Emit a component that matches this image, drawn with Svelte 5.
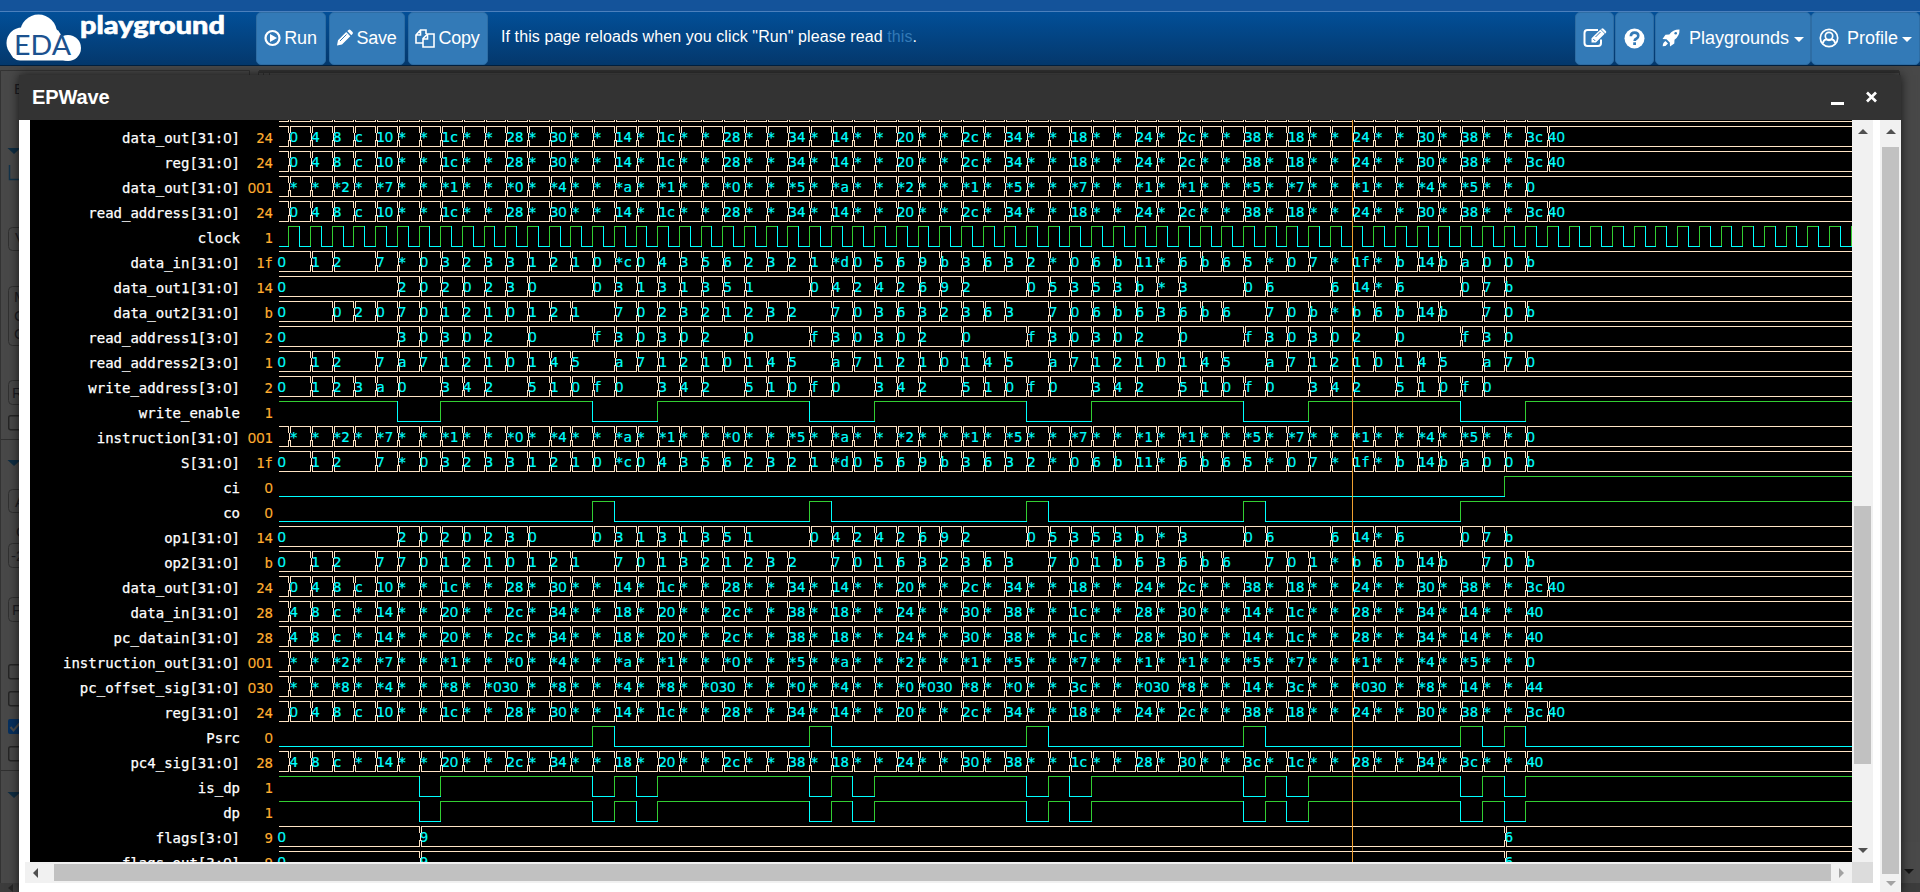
<script>
  const STEP = 21.7;
  const FIRST = 10.3;
  const WIDTH = 1573;
  const at = (k) => FIRST + STEP * k;

  const pcOut =
    '~ 0 4 8 c 10 * * 1c * * 28 * 30 * * 14 * 1c * * 28 * * 34 * 14 * * 20 * * 2c * 34 * * 18 * * 24 * 2c * * 38 * 18 * * 24 * * 30 * 38 * * 3c 40';
  const instr =
    '~ * * *2 * *7 * * *1 * * *0 * *4 * * *a * *1 * * *0 * * *5 * *a * * *2 * * *1 * *5 * * *7 * * *1 * *1 * * *5 * *7 * * *1 * * *4 * *5 * * 0';
  const sum =
    '0 . 1 2 . 7 * 0 3 2 3 3 1 2 1 0 *c 0 4 3 5 6 2 3 2 1 *d 0 5 6 9 b 3 6 3 2 * 0 6 b 11 * 6 b 6 5 * 0 7 * 1f * b 14 b a 0 0 b';
  const op1 =
    '0 . . . . . 2 0 2 0 2 3 0 . . 0 3 1 3 1 3 5 1 . . 0 4 2 4 2 6 9 2 . . 0 5 3 5 3 b * 3 . . 0 6 . . 6 14 * 6 . . 0 7 b';
  const out2 =
    '0 . . 0 2 0 7 0 1 2 1 0 1 2 1 . 7 0 2 3 2 1 2 3 2 . 7 0 3 6 3 2 3 6 3 . 7 0 6 b 6 3 6 b 6 . 7 0 b * b 6 b 14 b . 7 0 b';
  const op2 =
    '0 . 1 2 . 7 7 0 1 2 1 0 1 2 1 . 7 0 1 3 2 1 2 3 2 . 7 0 1 6 3 2 3 6 3 . 7 0 1 b 6 3 6 b 6 . 7 0 1 * b 6 b 14 b . 7 0 b';
  const ra1 =
    '0 . . . . . ' + '3 0 3 0 2 . 0 . . f '.repeat(5) + '3 0';
  const ra2 =
    '0 . 1 2 . 7 ' + 'a 7 1 2 1 0 1 4 5 . '.repeat(5) + 'a 7 0';
  const wa =
    '0 . 1 2 3 a ' + '0 . 3 4 2 . 5 1 0 f '.repeat(5) + '0';
  const next = (m) =>
    `~ 4 8 c * 14 * * 20 * * 2c * 34 * * 18 * 20 * * 2c * * 38 * 18 * * 24 * * 30 * 38 * * 1c * * 28 * 30 * * ${m} * 1c * * 28 * * 34 * ${m} * * 40`;
  const offset =
    '~ * * *8 * *4 * * *8 * *030 . * *8 * * *4 * *8 * *030 . * * *0 * *4 * * *0 *030 . *8 * *0 * * 3c * * *030 . *8 * * 14 * 3c * * *030 . * *8 * 14 * * 44';
  const flags = '0 . . . . . . 9' + ' .'.repeat(49) + ' 6';
  const blank = Array(59).fill('~').join(' ');

  const dpEdges = [6, 7, 14, 15, 16, 17, 24, 25, 26, 27, 34, 35, 36, 37, 44, 45, 46, 47, 54, 55, 56, 57];
  const clockEdges = Array.from({ length: 145 }, (_, i) => i / 2);

  const bus = (name, value, data) => ({ name, value, cells: cells(data) });
  const bit = (name, value, start, edges) => ({ name, value, lines: lines(start, edges) });

  function cells(data) {
    const out = [];
    data.split(' ').forEach((token, i) => {
      if (token === '.') return;
      const x = i === 0 ? -2 : at(i - 1);
      if (out.length) out[out.length - 1].end = x;
      out.push({ x, end: WIDTH + 6, text: token === '~' ? '' : token });
    });
    return out;
  }

  function outline(c) {
    const a = Math.round(c.x) + 0.5;
    const b = Math.round(c.end) + 0.5;
    const l = Math.max(a + 1, 0);
    const r = Math.min(b - 1, WIDTH);
    let d = `M${l} 2.5H${r}M${l} 22.5H${r}`;
    if (c.x > 0) d += `M${a + 1} 2V9M${a} 8.5V16.5M${a + 1} 16V23`;
    if (c.end < WIDTH) d += `M${b - 1} 2V9M${b} 8.5V16.5M${b - 1} 16V23`;
    return d;
  }

  function lines(start, edges) {
    let level = start;
    let x = 0;
    let high = '';
    let low = '';
    for (const k of edges) {
      const nx = Math.round(at(k) - 1) + 0.5;
      if (nx > WIDTH) break;
      if (level) {
        high += `M${x} 2.5H${nx}`;
        low += `M${nx} 2V23`;
      } else {
        low += `M${x} 22.5H${nx}`;
        high += `M${nx} 2V23`;
      }
      x = nx;
      level = !level;
    }
    if (level) high += `M${x} 2.5H${WIDTH}`;
    else low += `M${x} 22.5H${WIDTH}`;
    return { high, low };
  }

  const signals = [
    bus('', '', blank),
    bus('data_out[31:0]', '24', pcOut),
    bus('reg[31:0]', '24', pcOut),
    bus('data_out[31:0]', '001', instr),
    bus('read_address[31:0]', '24', pcOut),
    bit('clock', '1', false, clockEdges),
    bus('data_in[31:0]', '1f', sum),
    bus('data_out1[31:0]', '14', op1),
    bus('data_out2[31:0]', 'b', out2),
    bus('read_address1[3:0]', '2', ra1),
    bus('read_address2[3:0]', '1', ra2),
    bus('write_address[3:0]', '2', wa),
    bit('write_enable', '1', true, [5, 7, 14, 17, 24, 27, 34, 37, 44, 47, 54, 57]),
    bus('instruction[31:0]', '001', instr),
    bus('S[31:0]', '1f', sum),
    bit('ci', '0', false, [56]),
    bit('co', '0', false, [14, 15, 24, 25, 34, 35, 44, 45, 54]),
    bus('op1[31:0]', '14', op1),
    bus('op2[31:0]', 'b', op2),
    bus('data_out[31:0]', '24', pcOut),
    bus('data_in[31:0]', '28', next('14')),
    bus('pc_datain[31:0]', '28', next('14')),
    bus('instruction_out[31:0]', '001', instr),
    bus('pc_offset_sig[31:0]', '030', offset),
    bus('reg[31:0]', '24', pcOut),
    bit('Psrc', '0', false, [14, 15, 24, 25, 34, 35, 44, 45, 54, 55, 56, 57]),
    bus('pc4_sig[31:0]', '28', next('3c')),
    bit('is_dp', '1', true, dpEdges),
    bit('dp', '1', true, dpEdges),
    bus('flags[3:0]', '9', flags),
    bus('flags_out[3:0]', '9', flags),
  ];

  const parts = (s) => s.split(/(0+)/).filter(Boolean);
</script>

{#snippet label(s)}{#each parts(s) as p}{#if p[0] === '0'}<span class="zero">{p}</span>{:else}{p}{/if}{/each}{/snippet}

<div class="page">
  <div class="strip"></div>
  <header>
    <svg class="logo" width="232" height="53" viewBox="0 12 232 53">
      <g fill="#fff">
        <circle cx="38.500" cy="33" r="18.500" /><circle cx="22" cy="43" r="15.500" />
        <circle cx="68" cy="48" r="13" /><rect x="10" y="38" width="66" height="22.500" rx="10" />
        <circle cx="52" cy="37" r="9" />
      </g>
      <text class="eda" x="14" y="55" textLength="57" lengthAdjust="spacingAndGlyphs">EDA</text>
      <text class="play" x="80" y="34" textLength="145" lengthAdjust="spacingAndGlyphs">playground</text>
    </svg>
    <div class="group left">
      <button class="run">
        <svg width="17" height="18" viewBox="0 0 17 18"><circle cx="8.500" cy="9" r="7" fill="none" stroke="#fff" stroke-width="2.200" /><path d="M6 5l7 4-7 4z" fill="#fff" /></svg>Run
      </button>
      <button class="save">
        <svg width="17" height="18" viewBox="0 0 17 18"><path d="M1 16.500l1-5.200L10.200 3l4.100 4.200L6 15.500zM11.300 2l1.200-1.100q1-.8 2 .1l2 2q.8 1 0 2l-1.200 1.200z" fill="#fff" /><path d="M4 12l6.500-6.500" stroke="#337ab7" stroke-width="1" /></svg>Save
      </button>
      <button class="copy">
        <svg width="20" height="19" viewBox="0 0 20 19" fill="none" stroke="#fff" stroke-width="1.600"><path d="M7.500 14H1V6l4.500-5H11v4M5.500 1v5H1M8 9.500L12.500 5H19v13H8zM12.500 5v5H8" /></svg>Copy
      </button>
    </div>
    <p>If this page reloads when you click "Run" please read <a href="#this">this</a>.</p>
    <div class="group right">
      <button class="edit" aria-label="Edit">
        <svg width="24" height="20" viewBox="0 0 24 20"><path d="M18 11.500V15q0 3-3 3H4.500q-3 0-3-3V5q0-3 3-3H15" fill="none" stroke="#fff" stroke-width="2" /><path d="M8.500 14.500v-4.200L17.500 1.500l4.200 4.200-8.800 8.800zM18.500.7q1-1 2 0l2.300 2.200q.9 1 0 2l-.5.500L18 1.200z" fill="#fff" /><path d="M10.300 11l2 2M12.500 9l5-5" stroke="#337ab7" /></svg>
      </button>
      <button class="help" aria-label="Help">
        <svg width="21" height="21" viewBox="0 0 21 21"><circle cx="10.500" cy="10.500" r="10" fill="#fff" /><path d="M6.800 8.200Q7 4.600 10.600 4.600q3.700 0 3.700 3.200 0 1.800-1.700 2.700-2 1-2 2.400" fill="none" stroke="#337ab7" stroke-width="2.600" /><rect x="9.200" y="14.300" width="2.800" height="2.700" fill="#337ab7" /></svg>
      </button>
      <button class="grounds">
        <svg width="18" height="18" viewBox="0 0 18 18"><path d="M17.500.5Q11 .3 7.300 5.500L3.500 5.700.5 10l4 .2 3.300 3.300.2 4 4.300-3 .2-3.800Q17.800 7 17.500.5zM3.500 12Q.8 13.500.7 17.300 4.500 17.200 6 14.500z" fill="#fff" /><circle cx="13.700" cy="4.300" r="1.300" fill="#337ab7" /></svg>Playgrounds<i class="caret"></i>
      </button>
      <button class="profile">
        <svg width="20" height="20" viewBox="0 0 20 20"><circle cx="10" cy="10" r="8.700" fill="none" stroke="#fff" stroke-width="1.700" /><circle cx="10" cy="8" r="3.700" fill="none" stroke="#fff" stroke-width="1.700" /><path d="M3.800 15.300Q4.500 12 7 11.300q3 1.800 6 0 2.500.7 3.200 4" fill="none" stroke="#fff" stroke-width="1.900" /></svg>Profile<i class="caret"></i>
      </button>
    </div>
  </header>

  <main>
    <svg class="under" width="1920" height="826" viewBox="0 66 1920 826">
      <path d="M0.500 892V70.500H249.500V80M258.500 80V71.500H1899.500V80M263.500 80V71.500M269.500 80V71.500" fill="none" stroke="#333" />
      <path d="M259 71.500H1899" stroke="#323232" stroke-width="3" />
      <g fill="#0f2d42"><path d="M7.500 148h13l-6.500 6zM7.500 460h13l-6.500 6zM7.500 792h13l-6.500 6z" /></g>
      <path d="M9.500 165v14.500H19" fill="none" stroke="#123349" stroke-width="1.500" />
      <g fill="none" stroke="#303030"><rect x="8.500" y="227.500" width="60" height="23" rx="4" /><rect x="8.500" y="286.500" width="60" height="59" rx="4" /><rect x="8.500" y="380.500" width="60" height="24" rx="4" /><rect x="8.500" y="489.500" width="60" height="23" rx="4" /><rect x="8.500" y="543.500" width="60" height="24" rx="4" /><rect x="8.500" y="597.500" width="60" height="24" rx="4" /><path d="M1 439.500H40M1 770.500H40" /></g>
      <g fill="none" stroke="#252525" stroke-width="1.400"><rect x="8.700" y="415.700" width="14" height="14" rx="2" /><rect x="8.700" y="664.700" width="14" height="14" rx="2" /><rect x="8.700" y="691.700" width="14" height="14" rx="2" /><rect x="8.700" y="746.700" width="14" height="14" rx="2" /></g>
      <rect x="8" y="719" width="15" height="15" rx="2" fill="#07305e" /><path d="M10.500 727l3 3.500 6-7" fill="none" stroke="#4d4d4d" stroke-width="2" />
      <g class="dim"><text x="14" y="94">E</text><text x="15" y="243">V</text><text x="14" y="302">M</text><text x="14" y="321">C</text><text x="14" y="339">C</text><text x="12" y="398">R</text><text x="15" y="507">A</text><text x="16" y="537">O</text><text x="11" y="561">-2</text><text x="12" y="615">F</text></g>
      <path d="M1917.500 75V842" stroke="#474747" /><path d="M1901 842h19v41h-19z" fill="#494949" /><path d="M1901 883h19v9h-19zM0 883h19v9H0z" fill="#3c3c3c" />
      <path d="M1904 869h10l-5 5z" fill="#151515" /><path d="M13 884v8l-5-4z" fill="#252525" />
    </svg>

    <section class="modal">
      <div class="title">
        <h1>EPWave</h1>
        <svg width="50" height="20" viewBox="0 0 50 20" stroke="#fff"><path d="M1 16.500H14" stroke-width="3" /><path d="M37 5.500L46 14.500M46 5.500L37 14.500" stroke-width="2.700" /></svg>
      </div>
      <div class="body">
        <div class="frame">
          <div class="view">
            <div class="rows">
              {#each signals as s}
                <div class="row">
                  <div class="name">{@render label(s.name)}</div>
                  <div class="value">{@render label(s.value)}</div>
                  <svg class="wave" width={WIDTH} height="25" viewBox="0 0 {WIDTH} 25">
                    {#if s.cells}
                      <path class="bus" d={s.cells.map(outline).join('')} />
                      {#each s.cells as c}
                        {#if c.text}
                          <text x={c.x < 0 ? -1.5 : c.x + 0.2} y="18">{#each parts(c.text) as p}<tspan class:zero={p[0] === '0'}>{p}</tspan>{/each}</text>
                        {/if}
                      {/each}
                    {:else}
                      <path class="high" d={s.lines.high} />
                      <path class="low" d={s.lines.low} />
                    {/if}
                  </svg>
                </div>
              {/each}
            </div>
            <div class="cursor"></div>
          </div>
          <div class="vbar inner">
            <i class="up"></i>
            <div class="thumb"></div>
            <i class="down"></i>
          </div>
          <div class="hbar">
            <i class="prev"></i>
            <div class="thumb"></div>
            <i class="next"></i>
          </div>
          <div class="corner"></div>
        </div>
        <div class="vbar outer">
          <i class="up"></i>
          <div class="thumb"></div>
          <i class="down pale"></i>
        </div>
      </div>
    </section>
  </main>
</div>

<style>
  :global(body) { margin: 0; overflow: hidden; }
  .page { width: 1920px; height: 892px; overflow: hidden; background: #484848; font-family: "Liberation Sans", Arial, sans-serif; display: flex; flex-direction: column; }
  .strip { height: 11px; flex: none; background: #14539a; }
  header { box-sizing: border-box; height: 55px; flex: none; border-top: 1px solid #4b80bd; border-bottom: 1px solid #02203f; background: linear-gradient(#024f98, #04386c); display: flex; color: #fff; }
  .logo { flex: none; width: 232px; margin-right: 24px; overflow: visible; }
  .eda { font: 27px Lato, sans-serif; fill: #1c528f; }
  .play { font: 900 25px Lato, sans-serif; fill: #fff; stroke: #fff; stroke-width: .6; stroke-linejoin: round; }
  .group { display: flex; }
  .left { gap: 3px; }
  .right { margin-left: auto; }
  button { box-sizing: border-box; height: 53px; padding: 0; border: 1px solid #2e6da4; border-radius: 5px; background: #337ab7; color: #fff; font: 18px "Liberation Sans", Arial, sans-serif; display: flex; align-items: center; justify-content: center; gap: 4px; padding-bottom: 1px; }
  .left button { gap: 3px; letter-spacing: -.2px; padding-right: 1px; }
  .run { width: 70px; }
  .save { width: 76px; }
  .copy { width: 80px; }
  .edit { width: 39px; }
  .help { width: 39px; margin-left: 1px; }
  .grounds { width: 156px; margin-left: 1px; gap: 9px; }
  .profile { width: 109px; gap: 8px; }
  .caret { border: 5px solid transparent; border-top-color: #fff; border-bottom: 0; margin-left: -4px; margin-top: 2px; }
  p { margin: 15px 0 0 13px; font-size: 16px; line-height: 20px; letter-spacing: .09px; white-space: nowrap; }
  a { color: #337ab7; text-decoration: none; }
  main { display: grid; height: 826px; flex: none; }
  main > * { grid-area: 1 / 1; }
  .dim { font: 15px "Liberation Sans", sans-serif; fill: #1c1c22; }
  .modal { margin: 9px 0 0 19px; width: 1882px; height: 817px; background: #fff; box-shadow: 0 0 10px rgba(0, 0, 0, .7); display: flex; flex-direction: column; }
  .title { height: 45px; flex: none; background: #333; color: #fff; display: flex; align-items: center; justify-content: space-between; padding: 0 18px 0 13px; }
  h1 { font-size: 20px; line-height: 24px; margin: -2px 0 0; letter-spacing: -.1px; }
  .title svg { margin-top: -1px; margin-right: 3px; }
  .body { display: flex; height: 772px; justify-content: space-between; }
  .frame { display: grid; grid-template: 742px 21px / 1827px 21px; margin-left: 6px; }
  .view { position: relative; margin-left: 5px; background: #000; overflow: hidden; font: 14px/25px "DejaVu Sans Mono", monospace; }
  .rows { margin-top: -21px; }
  .row { display: flex; height: 25px; }
  .name { width: 210px; text-align: right; color: #fff; line-height: 28px; white-space: pre; -webkit-text-stroke: .25px #fff; }
  .value { width: 33px; text-align: right; color: #ffae30; line-height: 28px; -webkit-text-stroke: .15px #ffae30; }
  .zero { font-family: "Noto Sans", sans-serif; font-size: 14.700px; line-height: 1; }
  .wave { margin-left: 6px; flex: none; display: block; overflow: visible; }
  .wave text { fill: #0ff; stroke: #0ff; stroke-width: .2; }
  .wave path { fill: none; shape-rendering: crispEdges; }
  .bus { stroke: #ffe4c4; }
  .high { stroke: #32cd32; }
  .low { stroke: #0ff; }
  .cursor { position: absolute; left: 1322px; top: 0; width: 1px; height: 100%; background: #f0a030; }
  .vbar { background: #f1f1f1; display: flex; flex-direction: column; align-items: center; }
  .vbar .thumb { width: 17px; background: #c1c1c1; }
  .vbar i, .hbar i { flex: none; width: 0; height: 0; border: 5px solid transparent; }
  .vbar i.up { border-top: 0; border-bottom-color: #505050; }
  .vbar i.down { border-bottom: 0; border-top-color: #505050; }
  .inner .up { margin-top: 9px; }
  .inner .thumb { height: 258px; margin-top: 372px; }
  .inner .down { margin-top: 84px; }
  .outer { width: 21px; }
  .outer .up { margin-top: 9px; }
  .outer .thumb { height: 727px; margin-top: 13px; }
  .outer .down { margin-top: 7px; }
  .vbar i.pale { border-top-color: #a3a3a3; }
  .hbar { background: #f1f1f1; display: flex; align-items: center; }
  .hbar .thumb { width: 1777px; height: 17px; background: #c1c1c1; margin-left: 16px; }
  .hbar .prev { margin-left: 8px; border-left: 0; border-right: 5px solid #505050; }
  .hbar .next { margin-left: 8px; border-right: 0; border-left: 5px solid #a3a3a3; }
  .corner { background: #dcdcdc; }
</style>
